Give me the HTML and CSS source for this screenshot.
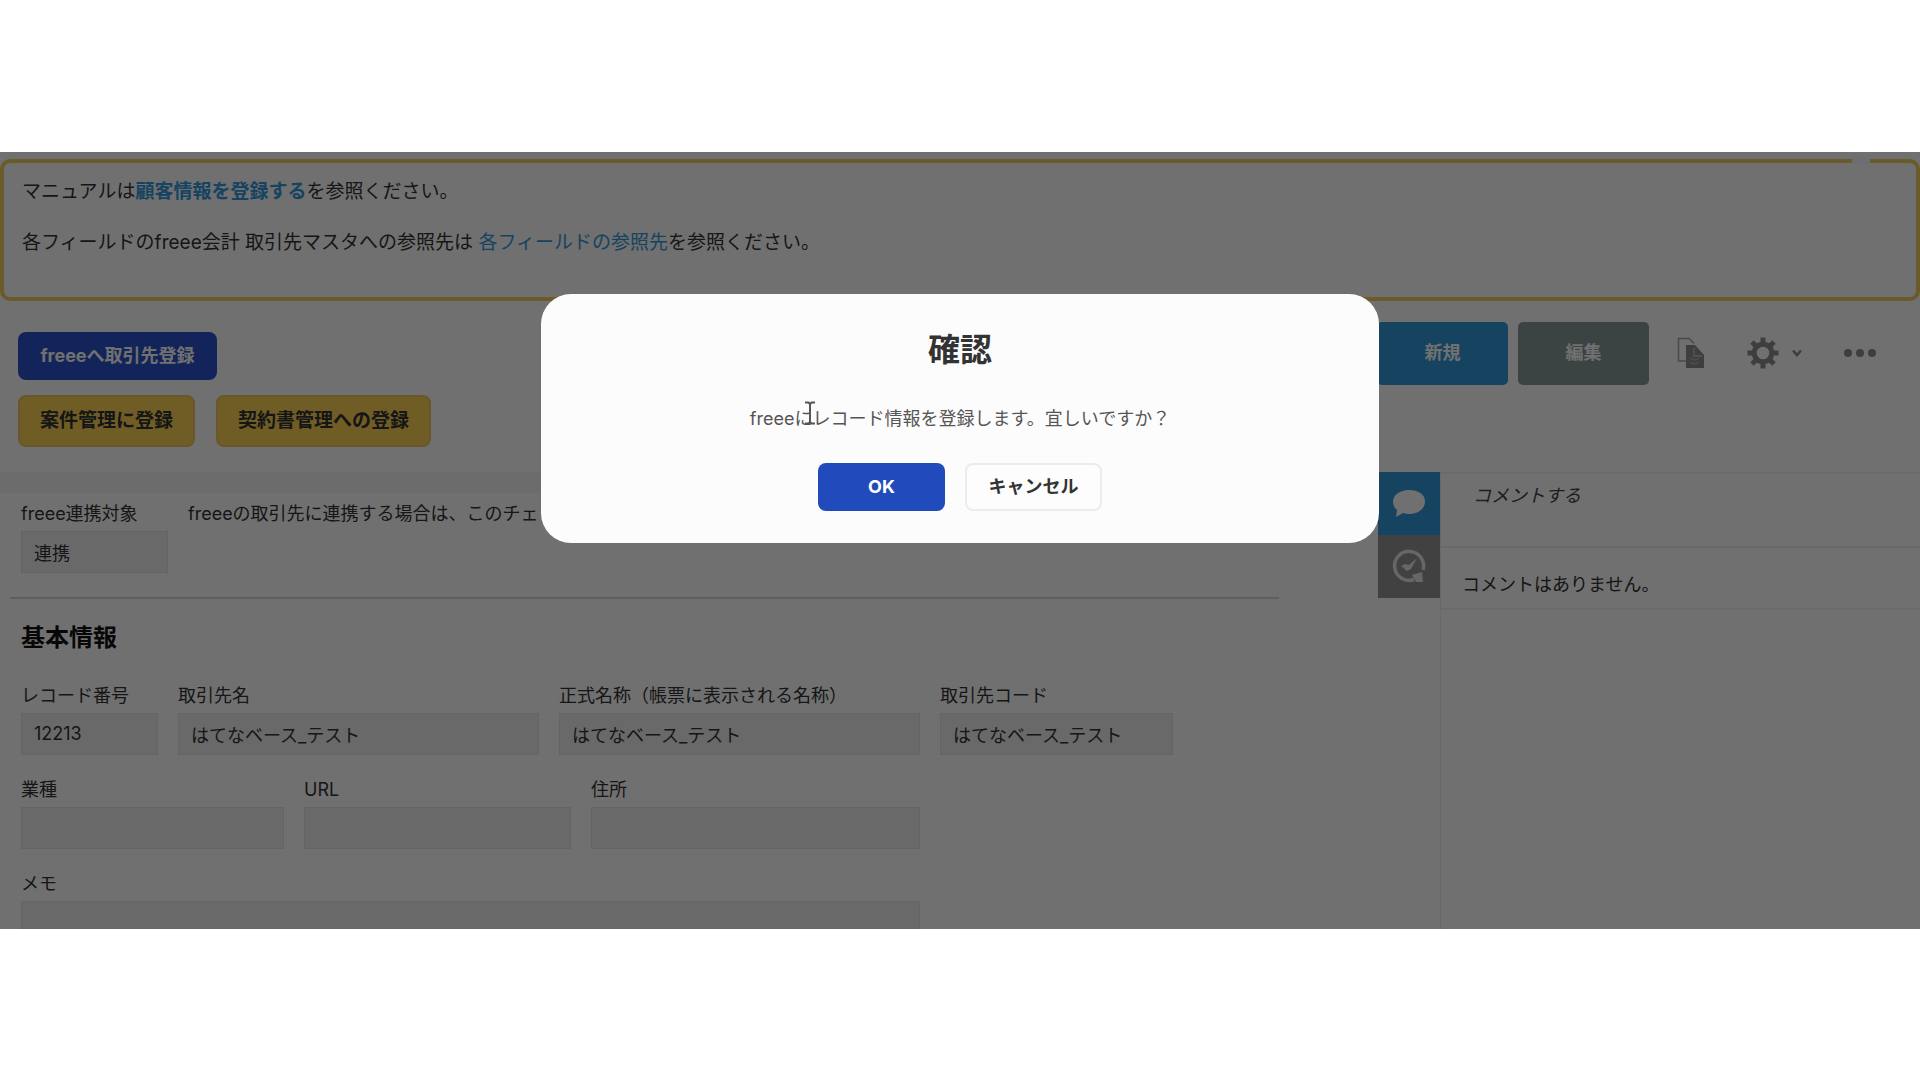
FILE: index.html
```html
<!DOCTYPE html>
<html lang="ja">
<head>
<meta charset="utf-8">
<meta name="viewport" content="width=device-width, initial-scale=1">
<title>顧客情報</title>
<link rel="stylesheet" href="styles.css">
</head>
<body>
<div class="screen">
  <section class="notice">
    <span class="notice-notch"></span>
    <p>マニュアルは<a class="strong" href="#manual">顧客情報を登録する</a>を参照ください。</p>
    <p>各フィールドのfreee会計 取引先マスタへの参照先は <a href="#fields">各フィールドの参照先</a>を参照ください。</p>
  </section>

  <div class="toolbar">
    <div class="custom-actions">
      <div class="button-row"><button class="btn btn-freee" type="button">freeeへ取引先登録</button></div>
      <div class="button-row">
        <button class="btn btn-yellow" type="button">案件管理に登録</button>
        <button class="btn btn-yellow" type="button">契約書管理への登録</button>
      </div>
    </div>
    <div class="record-actions">
      <button class="record-btn record-new" type="button">新規</button>
      <button class="record-btn record-edit" type="button">編集</button>
      <button class="icon-btn copy" type="button" aria-label="複製">
        <svg width="28" height="32" viewBox="0 0 28 32"><path d="M9 24H1.500V1.500H12l5 5" fill="none" stroke="#a6a6a6" stroke-width="1.500"/><path d="M9 8h9l9 10v13H9z" fill="#8e8e8e"/><path d="M17 11v8h8" fill="none" stroke="#c4c4c4" stroke-width="1.500"/><path d="M13 21c4 3 6 2 9 0M13 25c4 3 6 2 9 0" fill="none" stroke="#b4b4b4" stroke-width="1.500"/></svg>
      </button>
      <button class="icon-btn settings" type="button" aria-label="設定">
        <svg width="32" height="32" viewBox="-16 -16 32 32"><circle r="8.800" fill="none" stroke="#8e8e8e" stroke-width="5"/><g stroke="#8e8e8e" stroke-width="5"><path d="M0-15.500V-10M0 10v5.500M-15.500 0H-10M10 0h5.500"/><path d="M-11-11l4 4M7 7l4 4M-11 11l4-4M7-7l4-4"/></g></svg>
        <svg width="12" height="8" viewBox="0 0 12 8"><path d="M2 1.500l4 4.500 4-4.500" fill="none" stroke="#8e8e8e" stroke-width="2.500"/></svg>
      </button>
      <button class="icon-btn more" type="button" aria-label="その他">
        <svg width="34" height="10" viewBox="0 0 34 10"><g fill="#8e8e8e"><circle cx="5" cy="5" r="4"/><circle cx="17" cy="5" r="4"/><circle cx="29" cy="5" r="4"/></g></svg>
      </button>
    </div>
  </div>

  <div class="record">
    <main class="record-main">
      <div class="record-strip"></div>
      <div class="form">
        <div class="row">
          <div class="field w-link"><label for="link">freee連携対象</label><input id="link" value="連携" readonly></div>
          <p class="hint">freeeの取引先に連携する場合は、このチェックを入れてください。</p>
        </div>
      </div>
      <hr class="divider">
      <div class="form">
        <h2>基本情報</h2>
        <div class="row">
          <div class="field w-no"><label for="no">レコード番号</label><input id="no" value="12213" readonly></div>
          <div class="field w-name"><label for="name">取引先名</label><input id="name" value="はてなベース_テスト" readonly></div>
          <div class="field w-name"><label for="formal">正式名称（帳票に表示される名称）</label><input id="formal" value="はてなベース_テスト" readonly></div>
          <div class="field w-code"><label for="code">取引先コード</label><input id="code" value="はてなベース_テスト" readonly></div>
        </div>
        <div class="row">
          <div class="field w-type"><label for="type">業種</label><input id="type" readonly></div>
          <div class="field w-url"><label for="url">URL</label><input id="url" readonly></div>
          <div class="field w-addr"><label for="addr">住所</label><input id="addr" readonly></div>
        </div>
        <div class="row">
          <div class="field w-memo"><label for="memo">メモ</label><textarea id="memo" readonly></textarea></div>
        </div>
      </div>
    </main>
    <aside class="sidebar">
      <div class="tabs">
        <button class="tab active" type="button" aria-label="コメント">
          <svg width="34" height="30" viewBox="0 0 34 30"><path d="M17 2C8 2 1 7 1 13.500c0 4 2 7 4 8.500l-1 7 7-4c2 .600 4 1 6 1 9 0 16-5 16-12.500S26 2 17 2z" fill="#fff"/></svg>
        </button>
        <button class="tab" type="button" aria-label="変更履歴">
          <svg width="34" height="34" viewBox="0 0 34 34"><path d="M22 30.500A14.500 14.500 0 1 1 31 21" fill="none" stroke="#e8e8e8" stroke-width="3.500"/><path d="M20 26l10-3 1 10h-7z" fill="#e8e8e8"/><path d="M9 17l4-2 4 1 8-7-6 11-4 2z" fill="#e8e8e8"/></svg>
        </button>
      </div>
      <div class="comments">
        <input class="comment-input" placeholder="コメントする" aria-label="コメントする">
        <p class="comment-empty">コメントはありません。</p>
      </div>
    </aside>
  </div>

  <div class="overlay">
    <div class="dialog" role="dialog" aria-modal="true" aria-labelledby="dialog-title">
      <h1 id="dialog-title">確認</h1>
      <p>freeeにレコード情報を登録します。宜しいですか？</p>
      <div class="dialog-actions">
        <button class="btn dialog-ok" type="button">OK</button>
        <button class="btn dialog-cancel" type="button">キャンセル</button>
      </div>
      <svg class="cursor" width="14" height="24" viewBox="0 0 14 24"><path d="M2 1.500h3.500L7 3l1.500-1.500H12M7 3v18M2 22.500h3.500L7 21l1.500 1.500H12" fill="none" stroke="#555" stroke-width="2"/></svg>
    </div>
  </div>
</div>
</body>
</html>
```
FILE: styles.css
```css
* {
  box-sizing: border-box;
}

body {
  margin: 0;
  min-height: 100vh;
  display: grid;
  align-items: center;
  background: #fff;
  color: #333;
  font-family: Inter, "Noto Sans CJK JP", sans-serif;
  font-size: 18px;
  line-height: 24px;
}

button,
input,
textarea {
  font: inherit;
  color: inherit;
}

p,
h1,
h2 {
  margin: 0;
}

.screen {
  position: relative;
  padding-top: 7px;
  overflow: hidden;
}

.notice {
  position: relative;
  min-height: 142px;
  padding: 15px 18px;
  display: flex;
  flex-direction: column;
  gap: 23px;
  border: 4px solid #f3cf62;
  border-radius: 10px;
  font-size: 19px;
  line-height: 28px;
}

.notice a {
  color: #3498db;
  text-decoration: none;
}

.notice .strong {
  font-weight: 700;
}

.notice-notch {
  position: absolute;
  top: -6px;
  right: 46px;
  width: 18px;
  height: 8px;
  border-radius: 8px;
  background: #fafaff;
}

.toolbar {
  display: flex;
  justify-content: space-between;
  align-items: flex-start;
  padding: 21px 43px 25px 18px;
}

.custom-actions {
  display: flex;
  flex-direction: column;
  gap: 15px;
  padding-top: 10px;
}

.button-row {
  display: flex;
  gap: 21px;
}

.btn {
  min-height: 48px;
  padding: 0 20px;
  border: 0;
  border-radius: 8px;
  font-weight: 700;
}

.btn-freee {
  width: 199px;
  background: #2a52cc;
  color: #fff;
}

.btn-yellow {
  min-height: 52px;
  border: 2px solid #f0c662;
  background: #ffd455;
  font-size: 19px;
}

.record-actions {
  display: flex;
  align-items: center;
}

.record-btn {
  width: 131px;
  height: 63px;
  margin-right: 10px;
  border: 0;
  border-radius: 5px;
  color: #fff;
  font-weight: 700;
}

.record-new {
  background: #3498db;
}

.record-edit {
  background: #8a9a99;
}

.icon-btn {
  display: flex;
  align-items: center;
  gap: 12px;
  padding: 0;
  border: 0;
  background: none;
}

.copy {
  margin-left: 18px;
}

.settings {
  margin-left: 42px;
}

.more {
  margin-left: 40px;
}

.record {
  display: flex;
}

.record-main {
  flex: 1;
  min-width: 0;
}

.record-strip {
  height: 21px;
  background: #f5f5f5;
}

.form {
  padding: 0 21px;
}

.record-strip + .form {
  padding-top: 9px;
}

.row {
  display: flex;
  gap: 20px;
}

.row + .row {
  margin-top: 23px;
}

.field {
  display: flex;
  flex-direction: column;
  gap: 5px;
}

.field label {
  white-space: nowrap;
}

.field input,
.field textarea {
  width: 100%;
  height: 42px;
  padding: 0 12px;
  border: 1px solid #e3e3e3;
  border-radius: 0;
  background: #eee;
  outline: 0;
  resize: none;
}

.field textarea {
  height: 28px;
  border-bottom: 0;
}

.w-link { width: 147px; }
.w-no { width: 137px; }
.w-name { width: 361px; }
.w-code { width: 233px; }
.w-type { width: 263px; }
.w-url { width: 267px; }
.w-addr { width: 329px; }
.w-memo { width: 899px; }

.hint {
  white-space: nowrap;
}

.divider {
  height: 2px;
  margin: 24px 99px 21px 10px;
  border: 0;
  background: #d8d8d8;
}

h2 {
  margin-bottom: 28px;
  font-size: 24px;
  line-height: 36px;
  color: #111;
}

.sidebar {
  display: flex;
  width: 542px;
}

.tabs {
  display: flex;
  flex-direction: column;
  width: 62px;
}

.tab {
  display: grid;
  place-items: center;
  height: 63px;
  padding: 0;
  border: 0;
  background: #949494;
}

.active {
  background: #3498db;
}

.comments {
  flex: 1;
  border-left: 1px solid #f0f0f0;
}

.comment-input {
  display: block;
  width: 100%;
  height: 76px;
  padding: 0 32px 28px;
  border: 0;
  border-top: 2px solid #f4f4f4;
  border-bottom: 2px solid #f0f0f0;
  background: none;
  font-style: italic;
}

.comment-input::placeholder {
  color: #444;
  opacity: 1;
}

.comment-empty {
  padding: 25px 21px 11px;
  border-bottom: 2px solid #f4f4f4;
}

.overlay {
  position: absolute;
  inset: 0;
  display: flex;
  justify-content: center;
  align-items: flex-start;
  padding-top: 142px;
  background: rgba(0, 0, 0, 0.56);
}

.dialog {
  position: relative;
  display: flex;
  flex-direction: column;
  align-items: center;
  width: 838px;
  max-width: 100%;
  padding: 32px;
  border-radius: 30px;
  background: #fcfcfc;
}

.dialog h1 {
  font-size: 32px;
  line-height: 48px;
}

.dialog p {
  margin: 33px 0 32px;
  color: #555;
}

.dialog-actions {
  display: flex;
  gap: 20px;
}

.dialog-ok {
  width: 127px;
  background: #214bbd;
  color: #fff;
}

.dialog-cancel {
  width: 137px;
  border: 2px solid #ececec;
  background: #fdfdfd;
}

.cursor {
  position: absolute;
  top: 107px;
  left: 262px;
}
```
